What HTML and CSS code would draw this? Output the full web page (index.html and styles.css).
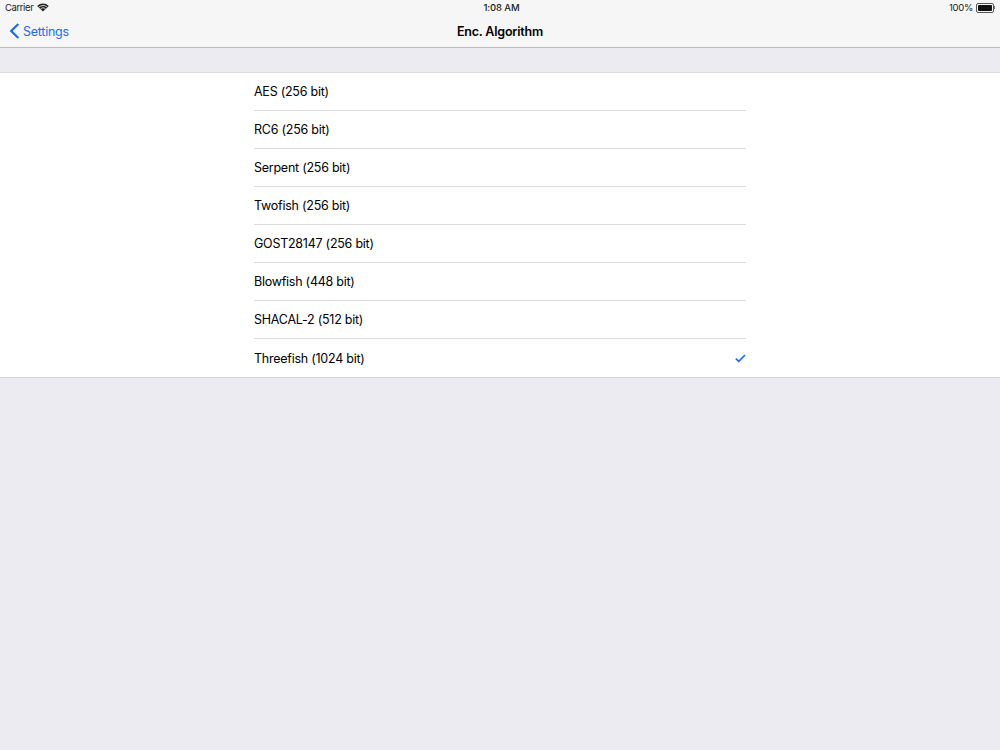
FILE: index.html
```html
<!DOCTYPE html>
<html lang="en">
<head>
    <meta charset="UTF-8">
    <title>Enc. Algorithm</title>
    <link rel="stylesheet" href="styles.css">
</head>
<body>
    <header class="top-bar">
        <div class="status-bar">
            <div class="status-left">
                <span>Carrier</span>
                <svg class="wifi-icon" width="12" height="9" viewBox="0 0 12 9">
                    <path d="M6 8.6 L0.2 2.9 A8.3 8.3 0 0 1 11.8 2.9 Z" fill="#222"/>
                    <path d="M2 4 A6 6 0 0 1 10 4" fill="none" stroke="#f7f7f8" stroke-width="0.8"/>
                    <path d="M3.6 5.7 A3.6 3.6 0 0 1 8.4 5.7" fill="none" stroke="#f7f7f8" stroke-width="0.8"/>
                </svg>
            </div>
            <div class="status-time">1:08 AM</div>
            <div class="status-right">
                <span class="battery-text">100%</span>
                <span class="battery"><span class="battery-fill"></span></span>
                <span class="battery-tip"></span>
            </div>
        </div>
        <nav class="nav-bar">
            <a class="back-link">
                <svg class="back-icon" width="11" height="16" viewBox="0 0 11 16">
                    <path d="M9.3 1 L2.2 8 L9.3 15" fill="none" stroke="#1a6bf5" stroke-width="2.2"/>
                </svg>
                <span>Settings</span>
            </a>
            <div class="nav-title">Enc. Algorithm</div>
        </nav>
    </header>

    <ul class="algo-list">
        <li class="algo-row"><div class="algo-inner">AES (256 bit)</div></li>
        <li class="algo-row"><div class="algo-inner">RC6 (256 bit)</div></li>
        <li class="algo-row"><div class="algo-inner">Serpent (256 bit)</div></li>
        <li class="algo-row"><div class="algo-inner">Twofish (256 bit)</div></li>
        <li class="algo-row"><div class="algo-inner">GOST28147 (256 bit)</div></li>
        <li class="algo-row"><div class="algo-inner">Blowfish (448 bit)</div></li>
        <li class="algo-row"><div class="algo-inner">SHACAL-2 (512 bit)</div></li>
        <li class="algo-row">
            <div class="algo-inner">
                <span>Threefish (1024 bit)</span>
                <svg class="check-icon" width="11" height="9" viewBox="0 0 11 9">
                    <path d="M0.8 4.6 L3.8 7.4 L10 1" fill="none" stroke="#1a6bf5" stroke-width="1.7"/>
                </svg>
            </div>
        </li>
    </ul>
</body>
</html>
```

FILE: styles.css
```css
html, body {
    height: 100%;
}

body {
    margin: 0;
    background: #ebebf1;
    color: #000;
    font-family: Inter, "Liberation Sans", sans-serif;
    overflow: hidden;
}

/* top bar */
.top-bar {
    background: #f6f6f7;
    border-bottom: 1px solid #bcbcbe;
    height: 47px;
}

.status-bar {
    display: grid;
    grid-template-columns: 1fr auto 1fr;
    align-items: center;
    height: 15px;
    padding: 0 5px;
    font-size: 9.5px;
    letter-spacing: -0.15px;
    color: #222;
}

.status-left {
    display: flex;
    align-items: center;
    gap: 4px;
    letter-spacing: -0.4px;
}

.status-time {
    padding-left: 3px;
    font-weight: 500;
}

.status-right {
    display: flex;
    align-items: center;
    justify-content: flex-end;
}

.battery-text {
    letter-spacing: -0.3px;
}

.battery {
    display: block;
    width: 14px;
    height: 6px;
    margin-left: 3px;
    padding: 1px;
    border: 0.5px solid #555;
    border-radius: 2px;
}

.battery-fill {
    display: block;
    height: 100%;
    background: #111;
    border-radius: 1px;
}

.battery-tip {
    width: 1px;
    height: 3px;
    background: #777;
}

.nav-bar {
    display: grid;
    grid-template-columns: 1fr auto 1fr;
    align-items: center;
    height: 32px;
}

.back-link {
    display: flex;
    align-items: center;
    gap: 3px;
    padding-left: 9px;
    font-size: 12.5px;
    letter-spacing: -0.25px;
    color: #1a6bf5;
}

.nav-title {
    font-size: 12.5px;
    font-weight: 600;
    letter-spacing: -0.2px;
}

/* list */
.algo-list {
    list-style: none;
    margin: 24px 0 0;
    padding: 0;
    background: #fff;
    border-top: 1px solid #dcdcdf;
    border-bottom: 1px solid #d4d4d7;
}

.algo-row {
    padding: 0 254px;
}

.algo-inner {
    display: flex;
    align-items: center;
    justify-content: space-between;
    height: 37px;
    border-bottom: 1px solid #dcdcdf;
    font-size: 12.5px;
    letter-spacing: -0.25px;
}

.algo-row:last-child .algo-inner {
    height: 38px;
    border-bottom: none;
}
```
